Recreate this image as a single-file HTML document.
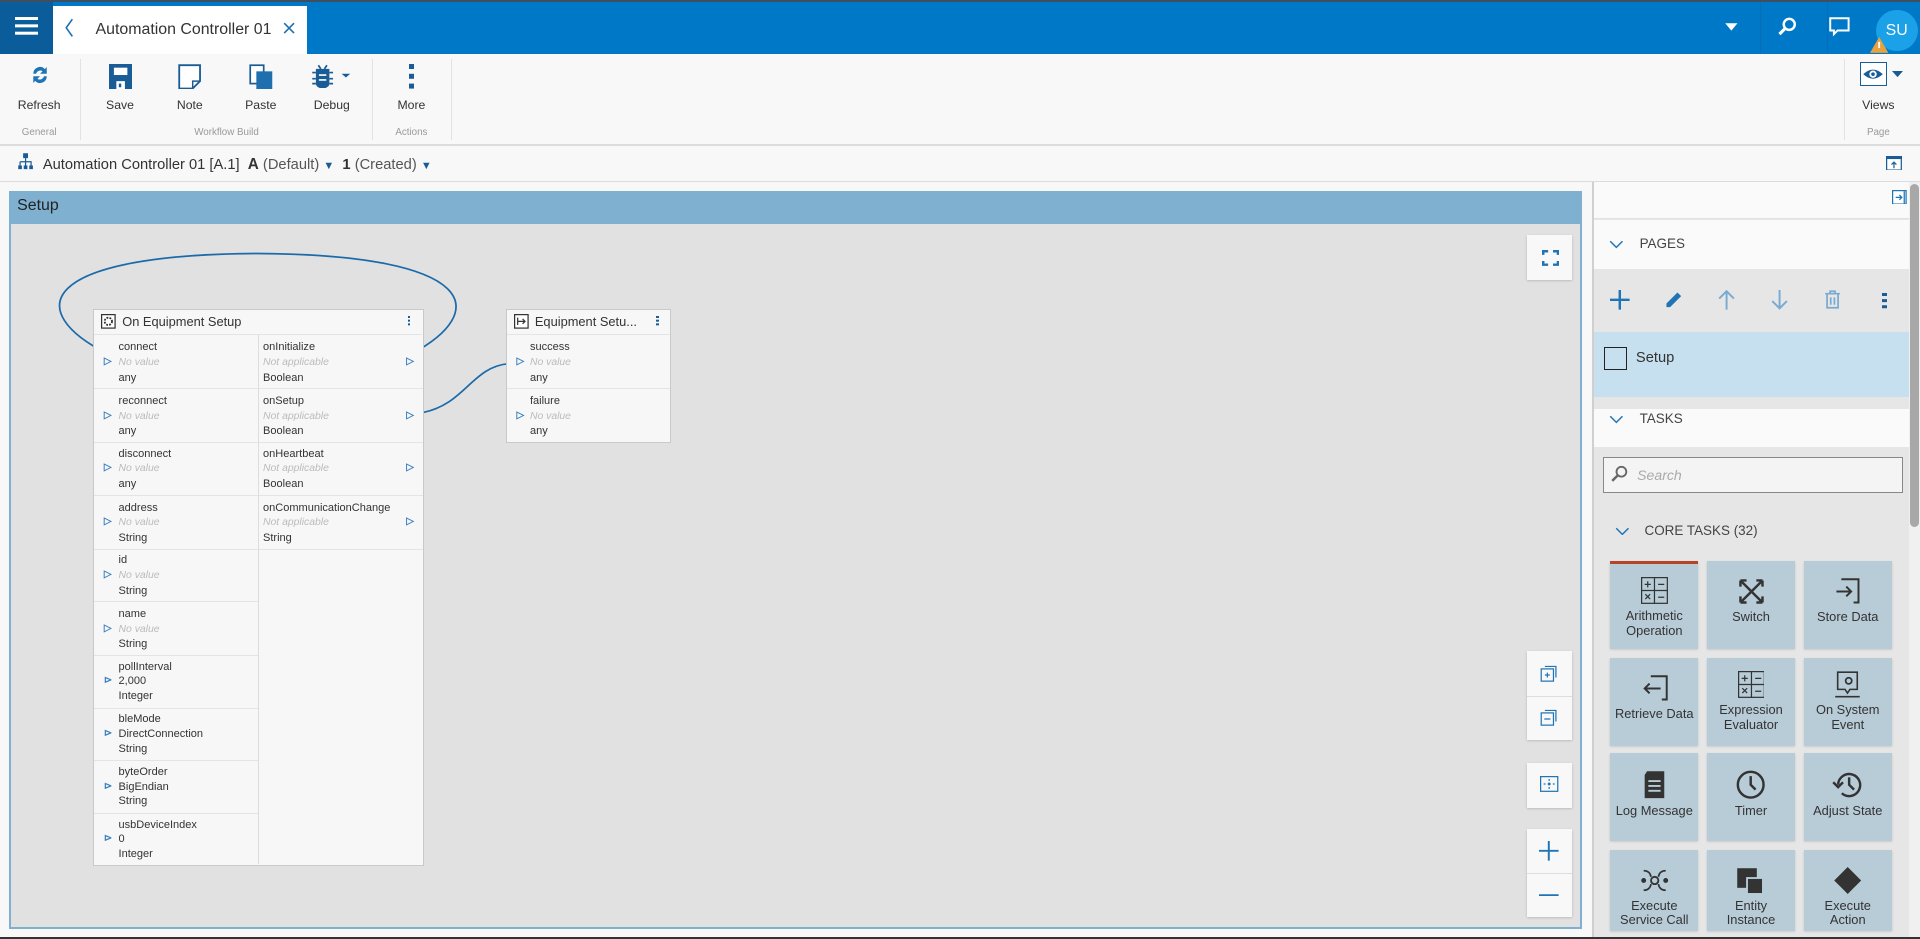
<!DOCTYPE html>
<html><head><meta charset="utf-8"><style>
*{box-sizing:border-box;margin:0;padding:0}
html,body{width:1920px;height:939px;overflow:hidden;background:#f8f8f8}
#w{zoom:1.22449;width:1568px;height:767px;position:relative;font-family:"Liberation Sans",sans-serif;color:#333;font-size:11px}
.a{position:absolute}
.top{left:0;top:0;width:1568px;height:44px;background:#0078c8;border-top:2px solid #3d4f60}
.tb{text-align:center;font-size:10px;color:#333}
.grp{font-size:8px;color:#999;text-align:center}
.sep{width:1px;background:#e2e2e2}
.node{background:#f7f7f7;border:1px solid #c9c9c9}
.row{position:absolute;left:0;width:134px;height:44px;border-bottom:1px solid #e4e4e4;font-size:9px;line-height:12px;padding:4px 0 0 20px}
.row i{color:#bbb;font-size:8.5px}
.row .t{position:absolute;left:8px;top:16px;color:#3a7fc0;font-size:8px;font-style:normal}
.tile{position:absolute;width:72px;height:72px;background:#b8ccd8;text-align:center;font-size:10.5px;color:#333;line-height:12px;box-shadow:0 1px 2px rgba(0,0,0,.15)}
.tile svg{display:block;margin:14px auto 4px}
.cb{position:absolute;left:1247px;width:37px;background:#f8f8f8;box-shadow:0 1px 2px rgba(0,0,0,.2)}
</style></head><body><div id="w">
<div class="a top"></div>
<div class="a" style="left:0;top:2px;width:43px;height:42px;background:#0b5c9a"></div>
<div class="a" style="left:12px;top:14px;width:19px;height:2px;background:#fff;box-shadow:0 6px 0 #fff,0 12px 0 #fff"></div>
<div class="a" style="left:43px;top:5px;width:208px;height:39px;background:#fff"></div>
<svg class="a" style="left:53px;top:15px" width="8" height="16"><path d="M6 1L1 8l5 7" stroke="#1c6fb0" fill="none" stroke-width="1.3"/></svg>
<div class="a" style="left:78px;top:17px;font-size:13px;color:#333">Automation Controller 01</div>
<svg class="a" style="left:231px;top:18px" width="10" height="10"><path d="M1 1l8 8M9 1l-8 8" stroke="#1c6fb0" stroke-width="1.3"/></svg>
<svg class="a" style="left:1408px;top:18px" width="12" height="8"><path d="M1 1h10l-5 6z" fill="#fff"/></svg>
<div class="a" style="left:1437px;top:2px;width:1px;height:42px;background:#0a6cb5"></div>
<div class="a" style="left:1492px;top:2px;width:1px;height:42px;background:#0a6cb5"></div>
<svg class="a" style="left:1451px;top:14px" width="16" height="16"><circle cx="10" cy="6" r="4.5" stroke="#fff" stroke-width="2" fill="none"/><path d="M7 9l-5 5" stroke="#fff" stroke-width="2.5"/></svg>
<svg class="a" style="left:1494px;top:14px" width="18" height="16"><path d="M1 1h15v10H7l-3 3v-3H1z" stroke="#fff" stroke-width="1.6" fill="none"/></svg>
<div class="a" style="left:1532px;top:8px;width:34px;height:34px;border-radius:50%;background:#1aa1e8;color:#fff;font-size:13px;text-align:center;line-height:34px">SU</div>
<svg class="a" style="left:1527px;top:30px" width="15" height="13"><path d="M7.5 0L15 13H0z" fill="#e8a23d"/><path d="M7.5 4v5" stroke="#fff" stroke-width="1.5"/></svg>

<!-- toolbar -->
<svg class="a" style="left:24px;top:52px" width="18" height="18"><path d="M3.5 8a5.5 5.5 0 0 1 9.5-3.8L14.5 2.5v5.5H9l2.1-2.1A3.5 3.5 0 0 0 5.8 8zM14.5 10a5.5 5.5 0 0 1-9.5 3.8L3.5 15.5V10H9l-2.1 2.1A3.5 3.5 0 0 0 12.2 10z" fill="#1f74b5"/></svg>
<div class="a tb" style="left:12px;top:80px;width:40px">Refresh</div>
<div class="a grp" style="left:12px;top:104px;width:40px">General</div>
<div class="a sep" style="left:65px;top:48px;height:66px"></div>
<svg class="a" style="left:89px;top:52px" width="19" height="21"><path d="M0 0h19v21H0z" fill="#1a5d96"/><rect x="4" y="3" width="11" height="6" fill="#fff"/><rect x="6" y="14" width="7" height="7" fill="#fff"/><rect x="8" y="16" width="2" height="3" fill="#1a5d96"/></svg>
<div class="a tb" style="left:78px;top:80px;width:40px">Save</div>
<svg class="a" style="left:145px;top:52px" width="20" height="21"><path d="M1 1h17v13l-6 6H1z" fill="#fff" stroke="#1a5d96" stroke-width="1.5"/><path d="M12 20v-6h6" fill="none" stroke="#1a5d96" stroke-width="1.2"/></svg>
<div class="a tb" style="left:135px;top:80px;width:40px">Note</div>
<svg class="a" style="left:203px;top:52px" width="20" height="21"><rect x="1" y="1" width="11" height="15" fill="#fff" stroke="#1a5d96" stroke-width="1.4"/><rect x="6" y="6" width="13" height="15" fill="#1f6fae"/></svg>
<div class="a tb" style="left:193px;top:80px;width:40px">Paste</div>
<svg class="a" style="left:254px;top:52px" width="36" height="20"><path d="M4 4h11v12a5.5 4 0 0 1-11 0z" fill="#1a5d96"/><path d="M1 7h3M15 7h3M1 12h3M15 12h3M1 16h3M15 16h3M6 1l2 3M13 1l-2 3" stroke="#1a5d96" stroke-width="1.4"/><path d="M6.5 9h6M6.5 13h6" stroke="#fff" stroke-width="1.3"/><path d="M25 8h7l-3.5 3z" fill="#1a5d96"/></svg>
<div class="a tb" style="left:249px;top:80px;width:44px">Debug</div>
<div class="a grp" style="left:130px;top:104px;width:110px">Workflow Build</div>
<div class="a sep" style="left:304px;top:48px;height:66px"></div>
<div class="a" style="left:334px;top:52px;width:4px;height:4px;background:#1a5d96;box-shadow:0 8px 0 #1a5d96,0 16px 0 #1a5d96"></div>
<div class="a tb" style="left:316px;top:80px;width:40px">More</div>
<div class="a grp" style="left:316px;top:104px;width:40px">Actions</div>
<div class="a sep" style="left:368px;top:48px;height:66px"></div>
<div class="a sep" style="left:1506px;top:48px;height:66px"></div>
<div class="a" style="left:1519px;top:51px;width:22px;height:19px;border:1.5px solid #1a5d96;background:#fff"></div>
<svg class="a" style="left:1521px;top:53px" width="18" height="15"><path d="M1 7.5Q9 0 17 7.5Q9 15 1 7.5z" fill="#1a5d96"/><circle cx="9" cy="7.5" r="3" fill="#fff"/><circle cx="9" cy="7.5" r="1.5" fill="#1a5d96"/></svg>
<svg class="a" style="left:1545px;top:58px" width="9" height="5"><path d="M0 0h9L4.5 5z" fill="#1a5d96"/></svg>
<div class="a tb" style="left:1514px;top:80px;width:40px">Views</div>
<div class="a grp" style="left:1514px;top:104px;width:40px">Page</div>
<div class="a" style="left:0;top:118px;width:1568px;height:1px;background:#dcdcdc"></div>

<!-- breadcrumb -->
<svg class="a" style="left:14px;top:124px" width="14" height="16"><rect x="5" y="1" width="4" height="4" fill="#1a5d96"/><path d="M7 5v4M2.5 8h9v3M2.5 8v3M7 9v2" stroke="#1a5d96" fill="none"/><rect x="1" y="11" width="3" height="3" fill="#1a5d96"/><rect x="5.5" y="11" width="3" height="3" fill="#1a5d96"/><rect x="10" y="11" width="3" height="3" fill="#1a5d96"/></svg>
<div class="a" style="left:35px;top:127px;font-size:12px;color:#333;white-space:nowrap">Automation Controller 01 [A.1] &nbsp;<b style="font-size:12.5px">A</b> <span style="color:#555">(Default)</span> <span style="color:#1a5d96;font-size:9px">▼</span> &nbsp;<b>1</b> <span style="color:#555">(Created)</span> <span style="color:#1a5d96;font-size:9px">▼</span></div>
<svg class="a" style="left:1540px;top:127px" width="13" height="12"><rect x=".5" y=".5" width="12" height="11" fill="#fff" stroke="#1a5d96"/><rect x="0" y="0" width="13" height="2.5" fill="#1a5d96"/><path d="M6.5 10V5M4.5 7l2-2 2 2" stroke="#1a5d96" fill="none"/></svg>
<div class="a" style="left:0;top:148px;width:1568px;height:1px;background:#dcdcdc"></div>

<!-- canvas -->
<div class="a" style="left:7px;top:156px;width:1285px;height:603px;background:#e1e1e1;border:2px solid #7fb0d0;border-top:none"></div>
<div class="a" style="left:7px;top:156px;width:1285px;height:27px;background:#7fb0d0;color:#222;font-size:13px;padding:5px 7px">Setup</div>
<svg class="a" style="left:0;top:0" width="600" height="400"><path d="M88 289 C20 255,28 208,210 207 C392 208,400 255,336 289" stroke="#1c6aa8" fill="none" stroke-width="1.4"/><path d="M345 337 C380 330,385 300,415 297" stroke="#1c6aa8" fill="none" stroke-width="1.4"/></svg>

<div class="a node" style="left:76px;top:252px;width:270px;height:455px">
 <div class="a" style="left:0;top:0;width:268px;height:21px;border-bottom:1px solid #e4e4e4;font-size:10.5px;padding:4px 0 0 23px">On Equipment Setup</div>
 <svg class="a" style="left:6px;top:4px" width="12" height="12"><rect x=".5" y=".5" width="11" height="11" fill="#fff" stroke="#333"/><circle cx="6" cy="6" r="3" stroke="#333" stroke-width="1.5" fill="none" stroke-dasharray="1.5 1"/></svg>
 <div class="a" style="left:256px;top:5px;width:2px;height:2px;background:#1a5d96;box-shadow:0 3px 0 #1a5d96,0 6px 0 #1a5d96"></div>
 <div class="a" style="left:134px;top:21px;width:1px;height:432px;background:#ddd"></div>
 <div class="a" style="left:0;top:21px">
  <div class="row" style="top:0">connect<br><i>No value</i><br>any<b class="t">▷</b></div>
  <div class="row" style="top:44px">reconnect<br><i>No value</i><br>any<b class="t">▷</b></div>
  <div class="row" style="top:87px">disconnect<br><i>No value</i><br>any<b class="t">▷</b></div>
  <div class="row" style="top:131px">address<br><i>No value</i><br>String<b class="t">▷</b></div>
  <div class="row" style="top:174px">id<br><i>No value</i><br>String<b class="t">▷</b></div>
  <div class="row" style="top:218px">name<br><i>No value</i><br>String<b class="t">▷</b></div>
  <div class="row" style="top:261px">pollInterval<br>2,000<br>Integer<b class="t">⊳</b></div>
  <div class="row" style="top:304px">bleMode<br>DirectConnection<br>String<b class="t">⊳</b></div>
  <div class="row" style="top:347px">byteOrder<br>BigEndian<br>String<b class="t">⊳</b></div>
  <div class="row" style="top:390px;border:none">usbDeviceIndex<br>0<br>Integer<b class="t">⊳</b></div>
 </div>
 <div class="a" style="left:135px;top:21px">
  <div class="row" style="top:0;padding-left:3px">onInitialize<br><i>Not applicable</i><br>Boolean<b class="t" style="left:120px">▷</b></div>
  <div class="row" style="top:44px;padding-left:3px">onSetup<br><i>Not applicable</i><br>Boolean<b class="t" style="left:120px">▷</b></div>
  <div class="row" style="top:87px;padding-left:3px">onHeartbeat<br><i>Not applicable</i><br>Boolean<b class="t" style="left:120px">▷</b></div>
  <div class="row" style="top:131px;padding-left:3px">onCommunicationChange<br><i>Not applicable</i><br>String<b class="t" style="left:120px">▷</b></div>
 </div>
</div>

<div class="a node" style="left:413px;top:252px;width:135px;height:110px">
 <div class="a" style="left:0;top:0;width:133px;height:21px;border-bottom:1px solid #e4e4e4;font-size:10.5px;padding:4px 0 0 23px;white-space:nowrap">Equipment Setu...</div>
 <svg class="a" style="left:6px;top:4px" width="12" height="12"><rect x=".5" y=".5" width="11" height="11" fill="#fff" stroke="#333"/><path d="M3 6h6M7 4l2 2-2 2M3 3v6" stroke="#333" fill="none"/></svg>
 <div class="a" style="left:122px;top:5px;width:2px;height:2px;background:#1a5d96;box-shadow:0 3px 0 #1a5d96,0 6px 0 #1a5d96"></div>
 <div class="a" style="left:0;top:21px">
  <div class="row" style="width:133px;padding-left:19px;top:0">success<br><i>No value</i><br>any<b class="t" style="left:8px">▷</b></div>
  <div class="row" style="width:133px;padding-left:19px;top:44px;border:none">failure<br><i>No value</i><br>any<b class="t" style="left:8px">▷</b></div>
 </div>
</div>

<div class="cb" style="top:192px;height:37px"></div>
<svg class="a" style="left:1259px;top:204px" width="14" height="13"><path d="M1 4V1h4M9 1h4v3M13 9v3H9M5 12H1V9" stroke="#1f74b5" stroke-width="2" fill="none"/></svg>
<div class="cb" style="top:532px;height:72px"></div>
<div class="a" style="left:1247px;top:568px;width:37px;height:1px;background:#ddd"></div>
<svg class="a" style="left:1258px;top:542px" width="16" height="15"><rect x="1" y="4" width="10" height="10" fill="none" stroke="#1f74b5"/><path d="M4 2h9v9M4 9h4M6 7v4" stroke="#1f74b5" fill="none"/></svg>
<svg class="a" style="left:1258px;top:578px" width="16" height="15"><rect x="1" y="4" width="10" height="10" fill="none" stroke="#1f74b5"/><path d="M4 2h9v9M3.5 9h5" stroke="#1f74b5" fill="none"/></svg>
<div class="cb" style="top:623px;height:37px"></div>
<svg class="a" style="left:1258px;top:634px" width="15" height="13"><rect x=".5" y=".5" width="14" height="12" fill="none" stroke="#1f74b5"/><circle cx="7.5" cy="6.5" r="1.2" fill="#1f74b5"/><path d="M7.5 2.5v1.5M7.5 9v1.5M3 6.5h1.5M10.5 6.5H12" stroke="#1f74b5"/></svg>
<div class="cb" style="top:677px;height:72px"></div>
<div class="a" style="left:1247px;top:713px;width:37px;height:1px;background:#ddd"></div>
<svg class="a" style="left:1257px;top:687px" width="16" height="16"><path d="M8 0v16M0 8h16" stroke="#1f74b5" stroke-width="1.6"/></svg>
<svg class="a" style="left:1257px;top:730px" width="16" height="2"><path d="M0 1h16" stroke="#1f74b5" stroke-width="1.6"/></svg>

<!-- right panel -->
<div class="a" style="left:1300px;top:149px;width:2px;height:618px;background:#d0d0d0"></div>
<div class="a" style="left:1302px;top:149px;width:257px;height:618px;background:#e6e6e6"></div>
<div class="a" style="left:1302px;top:149px;width:257px;height:30px;background:#fafafa;border-bottom:1px solid #e2e2e2"></div>
<svg class="a" style="left:1545px;top:155px" width="12" height="12"><rect x=".5" y=".5" width="11" height="11" fill="#fff" stroke="#1f74b5"/><path d="M3 6h5M6 4l2 2-2 2M10 1v10" stroke="#1f74b5" fill="none"/></svg>
<div class="a" style="left:1302px;top:180px;width:257px;height:40px;background:#fafafa"></div>
<svg class="a" style="left:1314px;top:196px" width="12" height="7"><path d="M1 1l5 5 5-5" stroke="#1f74b5" fill="none" stroke-width="1.2"/></svg>
<div class="a" style="left:1339px;top:193px;font-size:11px;color:#444">PAGES</div>
<svg class="a" style="left:1315px;top:237px" width="16" height="16"><path d="M8 0v16M0 8h16" stroke="#1f74b5" stroke-width="2"/></svg>
<svg class="a" style="left:1359px;top:237px" width="16" height="16"><path d="M2 11L11 2l3 3-9 9H2z" fill="#1f74b5"/></svg>
<svg class="a" style="left:1403px;top:237px" width="14" height="16"><path d="M7 1v15M1 7l6-6 6 6" stroke="#7aaad2" fill="none" stroke-width="1.6"/></svg>
<svg class="a" style="left:1446px;top:237px" width="14" height="16"><path d="M7 0v15M1 9l6 6 6-6" stroke="#7aaad2" fill="none" stroke-width="1.6"/></svg>
<svg class="a" style="left:1490px;top:237px" width="14" height="16"><path d="M1 3h12M5 3V1h4v2M2.5 3.5v11h9v-11M5.5 6v6M8.5 6v6" stroke="#7aaad2" fill="none" stroke-width="1.4"/></svg>
<div class="a" style="left:1537px;top:239px;width:4px;height:3px;background:#1a5d96;box-shadow:0 5px 0 #1a5d96,0 10px 0 #1a5d96"></div>
<div class="a" style="left:1302px;top:271px;width:257px;height:53px;background:#c6e0f0"></div>
<div class="a" style="left:1310px;top:283px;width:19px;height:19px;border:1px solid #222"></div>
<div class="a" style="left:1336px;top:286px;font-size:12px;color:#333">Setup</div>
<div class="a" style="left:1302px;top:334px;width:257px;height:31px;background:#fafafa"></div>
<svg class="a" style="left:1314px;top:339px" width="12" height="7"><path d="M1 1l5 5 5-5" stroke="#1f74b5" fill="none" stroke-width="1.2"/></svg>
<div class="a" style="left:1339px;top:336px;font-size:11px;color:#444">TASKS</div>
<div class="a" style="left:1309px;top:373px;width:245px;height:30px;background:#f4f4f4;border:1px solid #888"></div>
<svg class="a" style="left:1316px;top:380px" width="14" height="14"><circle cx="8.5" cy="5.5" r="4" stroke="#666" stroke-width="1.5" fill="none"/><path d="M5.5 8.5L1 13" stroke="#666" stroke-width="2"/></svg>
<div class="a" style="left:1337px;top:381px;font-size:11.5px;color:#aaa;font-style:italic">Search</div>
<svg class="a" style="left:1319px;top:430px" width="12" height="7"><path d="M1 1l5 5 5-5" stroke="#1f74b5" fill="none" stroke-width="1.2"/></svg>
<div class="a" style="left:1343px;top:427px;font-size:11px;color:#444">CORE TASKS (32)</div>

<div class="tile" style="left:1315px;top:458px;border-top:3px solid #b5442a"><svg width="22" height="22" style="margin-top:11px"><rect x=".5" y=".5" width="21" height="21" fill="none" stroke="#333"/><path d="M11 0v22M0 11h22M3 6h5M5.5 3.5v5M14 6h5M3.5 14l4 4M7.5 14l-4 4M14 16.5h5" stroke="#333"/></svg>Arithmetic<br>Operation</div>
<div class="tile" style="left:1394px;top:458px"><svg width="22" height="22"><path d="M2 2l18 18M20 2L2 20M2 2h5M2 2v5M20 2h-5M20 2v5M2 20h5M2 20v-5M20 20h-5M20 20v-5" stroke="#333" stroke-width="2" fill="none"/></svg>Switch</div>
<div class="tile" style="left:1473px;top:458px"><svg width="22" height="22"><path d="M6 1h14v19h-4M2 11h12M10 7l4 4-4 4" stroke="#333" stroke-width="1.6" fill="none"/></svg>Store Data</div>
<div class="tile" style="left:1315px;top:537px"><svg width="22" height="22"><path d="M8 1h13v19h-4M16 11H3M7 7l-4 4 4 4" stroke="#333" stroke-width="1.6" fill="none"/></svg>Retrieve Data</div>
<div class="tile" style="left:1394px;top:537px"><svg width="22" height="22" style="margin-top:11px"><rect x=".5" y=".5" width="21" height="21" fill="none" stroke="#333"/><path d="M11 0v22M0 11h22M3 6h5M5.5 3.5v5M14 6h5M3.5 14l4 4M7.5 14l-4 4M14 16.5h5" stroke="#333"/></svg>Expression<br>Evaluator</div>
<div class="tile" style="left:1473px;top:537px"><svg width="22" height="22" style="margin-top:11px"><path d="M3 1h16v14h-6l-2 3-2-3H3zM1 21h20" stroke="#333" stroke-width="1.3" fill="none"/><circle cx="12" cy="8" r="2.5" stroke="#333" stroke-width="1.4" fill="none"/></svg>On System<br>Event</div>
<div class="tile" style="left:1315px;top:615px"><svg width="22" height="24"><path d="M5 1h14v22H3V4z" fill="#333"/><path d="M6 9h10M6 13h10M6 17h10" stroke="#b8ccd8" stroke-width="1.5"/></svg>Log Message</div>
<div class="tile" style="left:1394px;top:615px"><svg width="24" height="24"><circle cx="12" cy="12" r="10.5" stroke="#333" stroke-width="2" fill="none"/><path d="M12 5v7l4 4" stroke="#333" stroke-width="2" fill="none"/></svg>Timer</div>
<div class="tile" style="left:1473px;top:615px"><svg width="26" height="24"><path d="M5 12a9 9 0 1 1 3 7" stroke="#333" stroke-width="2" fill="none"/><path d="M1 10l4 4 4-4" stroke="#333" stroke-width="2" fill="none"/><path d="M14 6v6l4 4" stroke="#333" stroke-width="2" fill="none"/></svg>Adjust State</div>
<div class="tile" style="left:1315px;top:694px;height:66px"><svg width="24" height="22"><circle cx="3" cy="11" r="2" fill="#333"/><circle cx="21" cy="11" r="2" fill="#333"/><circle cx="12" cy="11" r="3" fill="none" stroke="#333" stroke-width="1.5"/><path d="M3 3q5 0 6 5M21 3q-5 0-6 5M3 19q5 0 6-5M21 19q-5 0-6-5" stroke="#333" stroke-width="1.4" fill="none"/></svg>Execute<br>Service Call</div>
<div class="tile" style="left:1394px;top:694px;height:66px"><svg width="24" height="22"><rect x="1" y="1" width="16" height="16" fill="#333"/><rect x="9" y="9" width="13" height="13" fill="#333" stroke="#b8ccd8" stroke-width="1.5"/></svg>Entity<br>Instance</div>
<div class="tile" style="left:1473px;top:694px;height:66px"><svg width="24" height="22"><path d="M12 0l11 11-11 11L1 11z" fill="#333"/></svg>Execute<br>Action</div>

<div class="a" style="left:1559px;top:149px;width:9px;height:618px;background:#f0f0f0"></div>
<div class="a" style="left:1560px;top:150px;width:7px;height:280px;background:#a8a8a8;border-radius:4px"></div>
<div class="a" style="left:0;top:765px;width:1568px;height:2px;background:#333"></div>
</div></body></html>
